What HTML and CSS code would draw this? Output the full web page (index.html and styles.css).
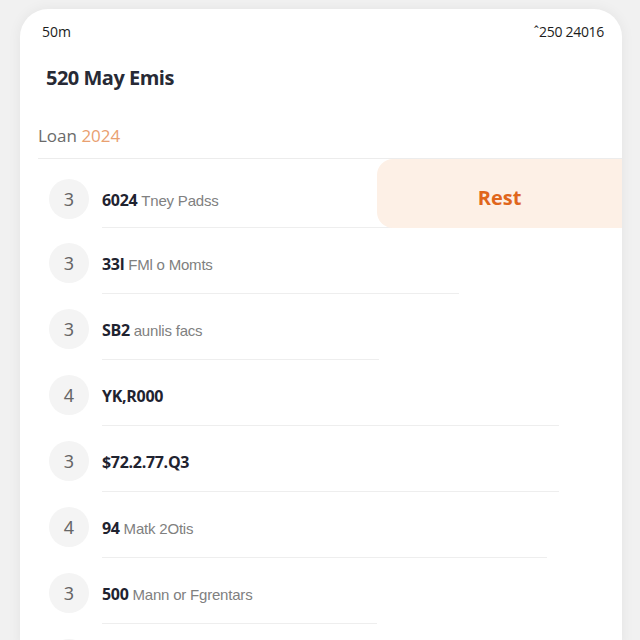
FILE: index.html
```html
<!DOCTYPE html>
<html>
<head>
<meta charset="utf-8">
<link rel="stylesheet" href="styles.css">
</head>
<body>
<div class="card">
  <div class="status">
    <span>50m</span>
    <span class="status-right">ˆ250 24016</span>
  </div>
  <h1 class="title">520 May Emis</h1>
  <div class="loan">Loan <span class="year">2024</span></div>
  <ul class="list">
    <li class="row">
      <span class="badge">3</span>
      <div class="body"><b>6024</b> <span class="sub">Tney Padss</span></div>
      <div class="swipe">Rest</div>
    </li>
    <li class="row">
      <span class="badge">3</span>
      <div class="body"><b>33l</b> <span class="sub">FMl o Momts</span></div>
    </li>
    <li class="row">
      <span class="badge">3</span>
      <div class="body"><b>SB2</b> <span class="sub">aunlis facs</span></div>
    </li>
    <li class="row">
      <span class="badge">4</span>
      <div class="body"><b>YK,R000</b></div>
    </li>
    <li class="row">
      <span class="badge">3</span>
      <div class="body"><b>$72.2.77.Q3</b></div>
    </li>
    <li class="row">
      <span class="badge">4</span>
      <div class="body"><b>94</b> <span class="sub">Matk 2Otis</span></div>
    </li>
    <li class="row">
      <span class="badge">3</span>
      <div class="body"><b>500</b> <span class="sub">Mann or Fgrentars</span></div>
    </li>
    <li class="row">
      <span class="badge"></span>
      <div class="body"></div>
    </li>
  </ul>
</div>
</body>
</html>
```

FILE: styles.css
```css
html, body {
  margin: 0;
  padding: 0;
  background: #f1f1f1;
  font-family: "Open Sans", "Noto Sans", sans-serif;
  overflow: hidden;
  height: 640px;
}

.card {
  margin: 9px 0 0 20px;
  width: 602px;
  height: 640px;
  background: #ffffff;
  border-radius: 28px 28px 0 0;
  box-shadow: 0 0 14px rgba(0, 0, 0, 0.06);
  position: relative;
  overflow: hidden;
}

.status {
  display: flex;
  justify-content: space-between;
  padding: 14px 18px 0 22px;
  font-size: 14px;
  color: #1c1c1c;
  line-height: 18px;
}

.status-right {
  letter-spacing: -0.3px;
}

.title {
  margin: 23px 0 0 26px;
  font-size: 20px;
  font-weight: 700;
  color: #272a35;
  letter-spacing: -0.5px;
  line-height: 28px;
}

.loan {
  margin: 32px 0 0 18px;
  font-size: 17px;
  color: #6a6a6a;
  line-height: 24px;
  padding-bottom: 10px;
  border-bottom: 1px solid #ececec;
}

.year {
  color: #e9a070;
}

.list {
  list-style: none;
  margin: 0;
  padding: 0;
}

.row {
  display: flex;
  align-items: flex-start;
  height: 66px;
  position: relative;
}

.row:first-child {
  height: 70px;
}

.badge {
  flex: none;
  width: 40px;
  height: 40px;
  margin: 14px 13px 0 29px;
  border-radius: 50%;
  background: #f4f4f4;
  color: #666;
  font-size: 18px;
  line-height: 40px;
  text-align: center;
  font-family: "Noto Sans", sans-serif;
}

.row:first-child .badge {
  margin-top: 20px;
}

.body {
  height: 65px;
  padding-top: 24px;
  box-sizing: border-box;
  border-bottom: 1px solid #eeeeee;
  font-size: 15px;
  color: #1f2330;
  white-space: nowrap;
}

.row:first-child .body {
  height: 69px;
  padding-top: 30px;
}

.body b {
  font-weight: 700;
  font-size: 16px;
  letter-spacing: -0.3px;
}

.sub {
  font-family: "Liberation Sans", Arial, sans-serif;
  color: #808080;
  font-size: 15px;
  letter-spacing: -0.2px;
}

.row:nth-child(1) .body { width: 357px; }
.row:nth-child(2) .body { width: 357px; }
.row:nth-child(3) .body { width: 277px; }
.row:nth-child(4) .body { width: 457px; }
.row:nth-child(5) .body { width: 457px; }
.row:nth-child(6) .body { width: 445px; }
.row:nth-child(7) .body { width: 275px; }
.row:nth-child(8) .body { width: 275px; border-bottom: none; }

.swipe {
  position: absolute;
  top: 0;
  right: 0;
  width: 245px;
  height: 69px;
  box-sizing: border-box;
  padding-top: 8px;
  background: #fdf0e6;
  border-radius: 16px 0 0 16px;
  color: #e0661c;
  font-size: 20px;
  font-weight: 700;
  display: flex;
  align-items: center;
  justify-content: center;
}
```
